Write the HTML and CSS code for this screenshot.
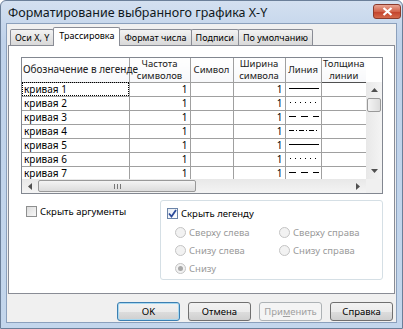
FILE: index.html
```html
<!DOCTYPE html>
<html>

<head>
  <meta charset="utf-8">
  <link rel="stylesheet" href="styles.css">
</head>

<body>
  <div class="window">
    <div class="titlebar">
      <span class="title">Форматирование выбранного графика X-Y</span>
      <span class="close">
        <svg width="11" height="9" viewBox="0 0 11 9"><path d="M1.5 1 L9.5 8 M9.5 1 L1.5 8" stroke="#fff" stroke-width="2.2"/></svg>
      </span>
    </div>

    <div class="client">
      <div class="tabs">
        <div class="tab">Оси X, Y</div>
        <div class="tab active">Трассировка</div>
        <div class="tab">Формат числа</div>
        <div class="tab">Подписи</div>
        <div class="tab">По умолчанию</div>
      </div>

      <div class="panel">
        <div class="grid">
          <div class="cells">
            <table>
              <colgroup>
                <col style="width: 107px">
                <col style="width: 61px">
                <col style="width: 43px">
                <col style="width: 52px">
                <col style="width: 36px">
                <col style="width: 45px">
              </colgroup>
              <thead>
                <tr>
                  <th class="first">Обозначение в легенде</th>
                  <th>Частота<br>символов</th>
                  <th>Символ</th>
                  <th>Ширина<br>символа</th>
                  <th>Линия</th>
                  <th class="last">Толщина<br>линии</th>
                </tr>
              </thead>
              <tbody>
                <tr><td class="focus">кривая 1</td><td class="num">1</td><td></td><td class="num">1</td><td><svg class="line" width="32" height="3"><line x1="1" y1="1.5" x2="31" y2="1.5"/></svg></td><td></td></tr>
                <tr><td>кривая 2</td><td class="num">1</td><td></td><td class="num">1</td><td><svg class="line" width="32" height="3"><line class="dot" x1="2" y1="1.5" x2="31" y2="1.5"/></svg></td><td></td></tr>
                <tr><td>кривая 3</td><td class="num">1</td><td></td><td class="num">1</td><td><svg class="line" width="32" height="3"><line class="dash" x1="1" y1="1.5" x2="31" y2="1.5"/></svg></td><td></td></tr>
                <tr><td>кривая 4</td><td class="num">1</td><td></td><td class="num">1</td><td><svg class="line" width="32" height="3"><line class="dashdot" x1="1" y1="1.5" x2="31" y2="1.5"/></svg></td><td></td></tr>
                <tr><td>кривая 5</td><td class="num">1</td><td></td><td class="num">1</td><td><svg class="line" width="32" height="3"><line x1="1" y1="1.5" x2="31" y2="1.5"/></svg></td><td></td></tr>
                <tr><td>кривая 6</td><td class="num">1</td><td></td><td class="num">1</td><td><svg class="line" width="32" height="3"><line class="dot" x1="2" y1="1.5" x2="31" y2="1.5"/></svg></td><td></td></tr>
                <tr><td>кривая 7</td><td class="num">1</td><td></td><td class="num">1</td><td><svg class="line" width="32" height="3"><line class="dash" x1="1" y1="1.5" x2="31" y2="1.5"/></svg></td><td></td></tr>
              </tbody>
            </table>
          </div>

          <div class="vscroll">
            <div class="vhead"></div>
            <div class="vbar">
              <span class="arrow"><svg width="7" height="4"><polygon points="0,4 3.5,0 7,4" fill="#505050"/></svg></span>
              <span class="vthumb"></span>
              <span class="track"></span>
              <span class="arrow"><svg width="7" height="4"><polygon points="0,0 3.5,4 7,0" fill="#505050"/></svg></span>
            </div>
          </div>

          <div class="hscroll">
            <span class="arrow"><svg width="4" height="7"><polygon points="4,0 0,3.5 4,7" fill="#505050"/></svg></span>
            <span class="hthumb"><span class="grip"></span></span>
            <span class="track"></span>
            <span class="arrow"><svg width="4" height="7"><polygon points="0,0 4,3.5 0,7" fill="#505050"/></svg></span>
          </div>
          <div class="corner"></div>
        </div>

        <div class="options">
          <div class="left-opts">
            <label class="check"><span class="box"></span>Скрыть аргументы</label>
          </div>
          <div class="group">
            <label class="check"><span class="box checked"><svg width="9" height="9" viewBox="0 0 9 9"><path d="M1 4.5 L3.5 7.5 L8 1" fill="none" stroke="#2a4a9a" stroke-width="1.8"/></svg></span>Скрыть легенду</label>
            <div class="radios">
              <span class="radio"><span class="dot"></span>Сверху слева</span>
              <span class="radio"><span class="dot"></span>Сверху справа</span>
              <span class="radio"><span class="dot"></span>Снизу слева</span>
              <span class="radio"><span class="dot"></span>Снизу справа</span>
              <span class="radio"><span class="dot on"></span>Снизу</span>
            </div>
          </div>
        </div>
      </div>

      <div class="buttons">
        <button class="btn default">OK</button>
        <button class="btn">Отмена</button>
        <button class="btn" disabled>При<u>м</u>енить</button>
        <button class="btn">Справка</button>
      </div>
    </div>
  </div>
</body>

</html>
```

FILE: styles.css
```css
* {
  margin: 0;
  padding: 0;
  box-sizing: border-box;
}

body {
  background-color: #ffffff;
  font-family: "Noto Sans", "Open Sans", sans-serif;
  font-size: 9.5px;
  color: #000;
}

.window {
  display: flex;
  flex-direction: column;
  width: 403px;
  height: 329px;
  padding: 0 5px 5px;
  border: 1px solid #6b7f99;
  border-radius: 6px 6px 0 0;
  background: linear-gradient(#d3e0f0, #bfd2ea 40px, #c3d6ec);
}

.titlebar {
  display: flex;
  align-items: center;
  justify-content: space-between;
  height: 22px;
  padding-left: 2px;
}

.title {
  font-size: 12.5px;
  color: #101820;
}

.close {
  display: flex;
  align-items: center;
  justify-content: center;
  width: 28px;
  height: 15px;
  margin-right: -4px;
  margin-top: -2px;
  border: 1px solid #8a3a2c;
  border-radius: 3px;
  background: linear-gradient(#e9a593, #d2644c 50%, #c2402a 51%, #d4694b);
}

.client {
  flex: 1;
  padding: 3px 1px 0;
  border: 1px solid #8ba0bc;
  background-color: #f0f0f0;
}

/* tabs */
.tabs {
  display: flex;
  align-items: flex-end;
  height: 18px;
  padding-left: 2px;
}

.tab {
  height: 16px;
  padding: 0 4px;
  font-size: 9px;
  line-height: 15px;
  border: 1px solid #898c95;
  border-bottom: none;
  margin-right: -1px;
  border-radius: 2px 2px 0 0;
  background: linear-gradient(#f3f3f3, #e5e5e5 50%, #d9d9d9);
  white-space: nowrap;
}

.tab.active {
  position: relative;
  z-index: 1;
  height: 19px;
  margin-bottom: -1px;
  padding: 0 5px;
  line-height: 16px;
  background: #ffffff;
}

.panel {
  height: 249px;
  padding: 11px 0 0 12px;
  border: 1px solid #898c95;
  background-color: #ffffff;
}

/* data grid */
.grid {
  display: grid;
  grid-template-columns: 344px 16px;
  grid-template-rows: 121px 14px;
  width: 362px;
  height: 137px;
  border: 1px solid #828790;
}

.cells {
  overflow: hidden;
}

.cells table {
  table-layout: fixed;
  width: 344px;
  border-collapse: collapse;
  border-style: hidden;
}

.cells th {
  height: 24px;
  padding: 0;
  font-weight: normal;
  font-size: 9.5px;
  line-height: 11.5px;
  color: #202020;
  text-align: center;
  border: 1px solid #a0a0a0;
  background: linear-gradient(#ffffff, #f7f8fa);
  white-space: nowrap;
}

.cells th.first {
  text-align: left;
  padding-left: 1px;
  font-size: 10px;
}

.cells th.last {
  border-right: 1px solid #505050;
  border-bottom: 1px solid #505050;
}

.cells td {
  height: 14px;
  padding: 1px 2px 0;
  font-size: 10px;
  line-height: 10px;
  vertical-align: top;
  border: 1px solid #a0a0a0;
  white-space: nowrap;
}

.cells td.num {
  text-align: right;
}

.cells td.focus {
  outline: 1px dotted #000;
  outline-offset: -1px;
}

.line {
  display: block;
  margin-top: 3px;
  stroke: #000;
  stroke-width: 1;
}

.line .dot {
  stroke-dasharray: 1 4;
}

.line .dash {
  stroke-dasharray: 7 5;
}

.line .dashdot {
  stroke-dasharray: 5 2 1 2;
}

/* scrollbars */
.vscroll {
  display: flex;
  flex-direction: column;
}

.vhead {
  height: 24px;
  background-color: #ffffff;
}

.vbar {
  flex: 1;
  display: flex;
  flex-direction: column;
  background: linear-gradient(90deg, #e8e8e8, #f4f4f4);
}

.vbar .arrow {
  display: flex;
  align-items: center;
  justify-content: center;
  height: 16px;
}

.vthumb {
  height: 14px;
  margin: 0 1px;
  border: 1px solid #999;
  border-radius: 2px;
  background: linear-gradient(90deg, #f4f4f4, #dcdcdc);
}

.track {
  flex: 1;
}

.hscroll {
  display: flex;
  background: linear-gradient(#e8e8e8, #f4f4f4);
}

.hscroll .arrow {
  display: flex;
  align-items: center;
  justify-content: center;
  width: 16px;
}

.hthumb {
  display: flex;
  align-items: center;
  justify-content: center;
  width: 158px;
  margin: 1px 0;
  border: 1px solid #999;
  border-radius: 2px;
  background: linear-gradient(#f4f4f4, #dcdcdc);
}

.grip {
  width: 7px;
  height: 5px;
  background: repeating-linear-gradient(90deg, #777 0 1px, transparent 1px 3px);
}

.corner {
  background-color: #f0f0f0;
}

/* options */
.options {
  display: flex;
  margin-top: 6px;
}

.left-opts {
  width: 139px;
  padding: 5px 0 0 5px;
}

.check {
  display: flex;
  align-items: center;
  gap: 3px;
  height: 12px;
}

.box {
  display: flex;
  align-items: center;
  justify-content: center;
  width: 11px;
  height: 11px;
  border: 1px solid #8e8f8f;
  background: linear-gradient(135deg, #dcdcdc, #f8f8f8);
}

.box.checked {
  border-color: #6b84a8;
  background: linear-gradient(135deg, #e6ecf4, #ffffff);
}

.group {
  width: 223px;
  height: 80px;
  padding: 6px 0 0 6px;
  border: 1px solid #d5dfe5;
  border-radius: 3px;
}

.radios {
  display: grid;
  grid-template-columns: 104px 100px;
  grid-auto-rows: 18px;
  margin-top: 4px;
  padding-left: 8px;
}

.radio {
  display: flex;
  align-items: center;
  gap: 3px;
  color: #9a9a9a;
}

.radio .dot {
  display: flex;
  align-items: center;
  justify-content: center;
  width: 11px;
  height: 11px;
  border: 1px solid #c4c4c4;
  border-radius: 50%;
  background: #f2f2f2;
}

.radio .dot.on::after {
  content: "";
  width: 5px;
  height: 5px;
  border-radius: 50%;
  background: #a8a8a8;
}

/* dialog buttons */
.buttons {
  display: flex;
  justify-content: flex-end;
  gap: 8px;
  margin-top: 8px;
  padding-right: 2px;
}

.btn {
  width: 63px;
  height: 19px;
  font-family: "Noto Sans", "Open Sans", sans-serif;
  font-size: 9.5px;
  color: #000;
  border: 1px solid #707070;
  border-radius: 3px;
  background: linear-gradient(#f2f2f2, #ebebeb 50%, #dddddd 51%, #cfcfcf);
}

.btn.default {
  border-color: #3c7fb1;
  box-shadow: inset 0 0 0 1px #a8d8f0;
}

.btn:disabled {
  color: #a0a0a0;
  border-color: #adb2b5;
  background: #f4f4f4;
}
```
